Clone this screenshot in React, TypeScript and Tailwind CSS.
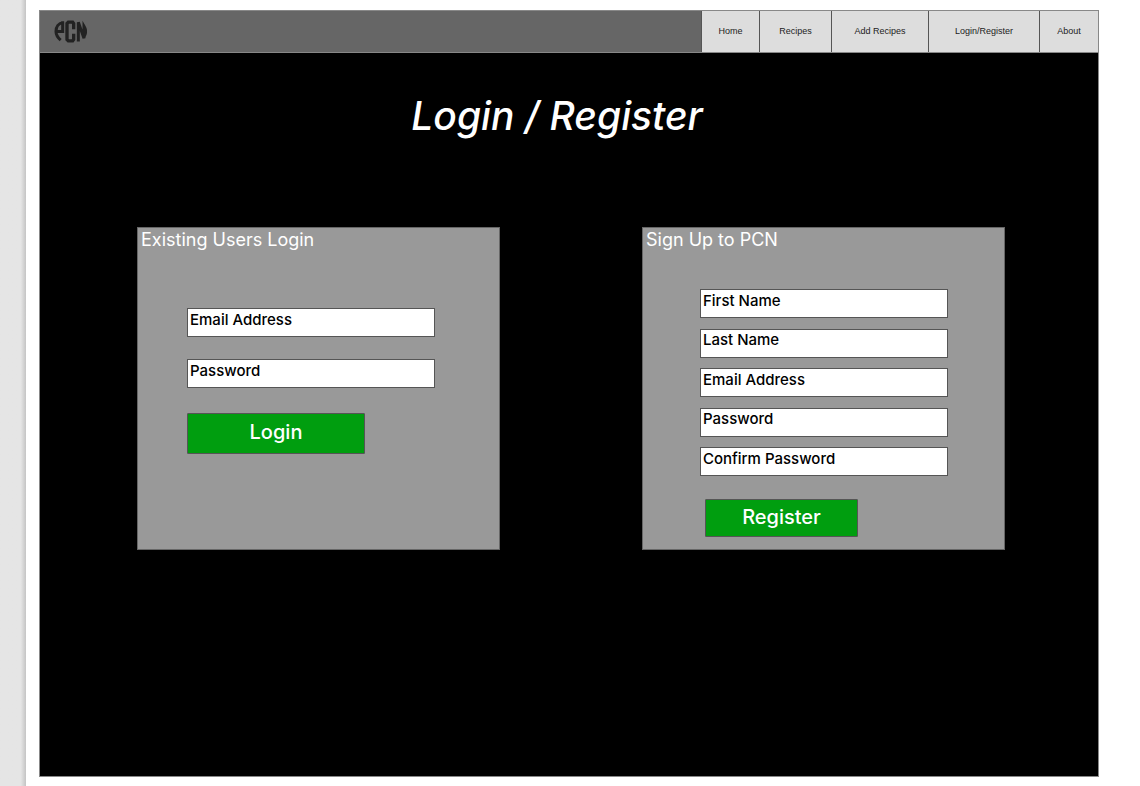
import React from "react";

const links = [
  { label: "Home", width: "w-[58px]" },
  { label: "Recipes", width: "w-[72px]" },
  { label: "Add Recipes", width: "w-[97px]" },
  { label: "Login/Register", width: "w-[111px]" },
  { label: "About", width: "w-[59px]" },
];

function Logo() {
  return (
    <svg
      role="img"
      aria-label="PCN"
      viewBox="0 0 99 68"
      className="h-[23px] w-[33px]"
      fill="none"
      stroke="#222"
      strokeWidth="9"
    >
      <path d="M26 3V34H9M27 8C14 9 6 20 6 34C6 46 12 53 20 60" />
      <path d="M59 27V10L56 6H43L39 10V58L43 62H56L59 58V41" strokeWidth="10" />
      <path d="M73 64V6L90 54V18C96 28 96 40 90 50" strokeWidth="9" />
    </svg>
  );
}

function Field({ label, type = "text" }: { label: string; type?: string }) {
  return (
    <input
      type={type}
      aria-label={label}
      placeholder={label}
      className="block h-[29px] w-full border border-[#555] bg-white px-[2px] pb-[7px] text-[15px] font-medium text-black outline-none placeholder:text-black placeholder:opacity-100"
    />
  );
}

function Panel({ title, children }: { title: string; children: React.ReactNode }) {
  return (
    <form
      onSubmit={(e) => e.preventDefault()}
      className="flex h-[323px] w-[363px] flex-col border border-[#666] bg-[#999]"
    >
      <h2 className="px-[3px] text-[18px] leading-6 text-white">{title}</h2>
      {children}
    </form>
  );
}

export default function App() {
  return (
    <div className="flex min-h-screen bg-white font-['Inter',sans-serif]">
      <aside className="w-[26px] shrink-0 bg-linear-to-r from-[#e5e5e5] from-80% to-[#c4c4c4]" />
      <div className="flex grow flex-col pt-[10px] pr-[41px] pb-[9px] pl-[13px]">
        <div className="flex grow flex-col border border-[#888] bg-black">
          <header className="flex h-[42px] items-stretch justify-between border-b border-[#888] bg-[#666]">
            <a href="#home" className="flex items-center pl-[14px]">
              <Logo />
            </a>
            <nav className="flex font-['Liberation_Sans',sans-serif]">
              {links.map((l) => (
                <a
                  key={l.label}
                  href="#"
                  className={`${l.width} flex items-center justify-center border-l border-[#555] bg-[#ddd] text-[9px] text-[#222]`}
                >
                  {l.label}
                </a>
              ))}
            </nav>
          </header>
          <main>
            <h1 className="pt-[39px] pr-6 text-center text-[39px] leading-[48px] font-medium text-white italic">
              Login / Register
            </h1>
            <div className="flex flex-wrap justify-between gap-6 pt-[87px] pr-[93px] pl-[97px]">
              <Panel title="Existing Users Login">
                <div className="flex w-[297px] flex-col gap-[22px] pt-[56px] pl-[49px]">
                  <Field label="Email Address" type="email" />
                  <Field label="Password" type="password" />
                </div>
                <button className="mt-[25px] ml-[49px] h-[41px] w-[178px] rounded-[1px] border border-[#555] bg-[#009e0f] pb-[3px] text-[20px] font-medium text-white">
                  Login
                </button>
              </Panel>
              <Panel title="Sign Up to PCN">
                <div className="mt-[37px] ml-[57px] flex h-[187px] w-[248px] flex-col justify-between">
                  <Field label="First Name" />
                  <Field label="Last Name" />
                  <Field label="Email Address" type="email" />
                  <Field label="Password" type="password" />
                  <Field label="Confirm Password" type="password" />
                </div>
                <button className="mt-[23px] ml-[62px] h-[38px] w-[153px] rounded-[1px] border border-[#555] bg-[#009e0f] pb-[3px] text-[20px] font-medium text-white">
                  Register
                </button>
              </Panel>
            </div>
          </main>
        </div>
      </div>
    </div>
  );
}
